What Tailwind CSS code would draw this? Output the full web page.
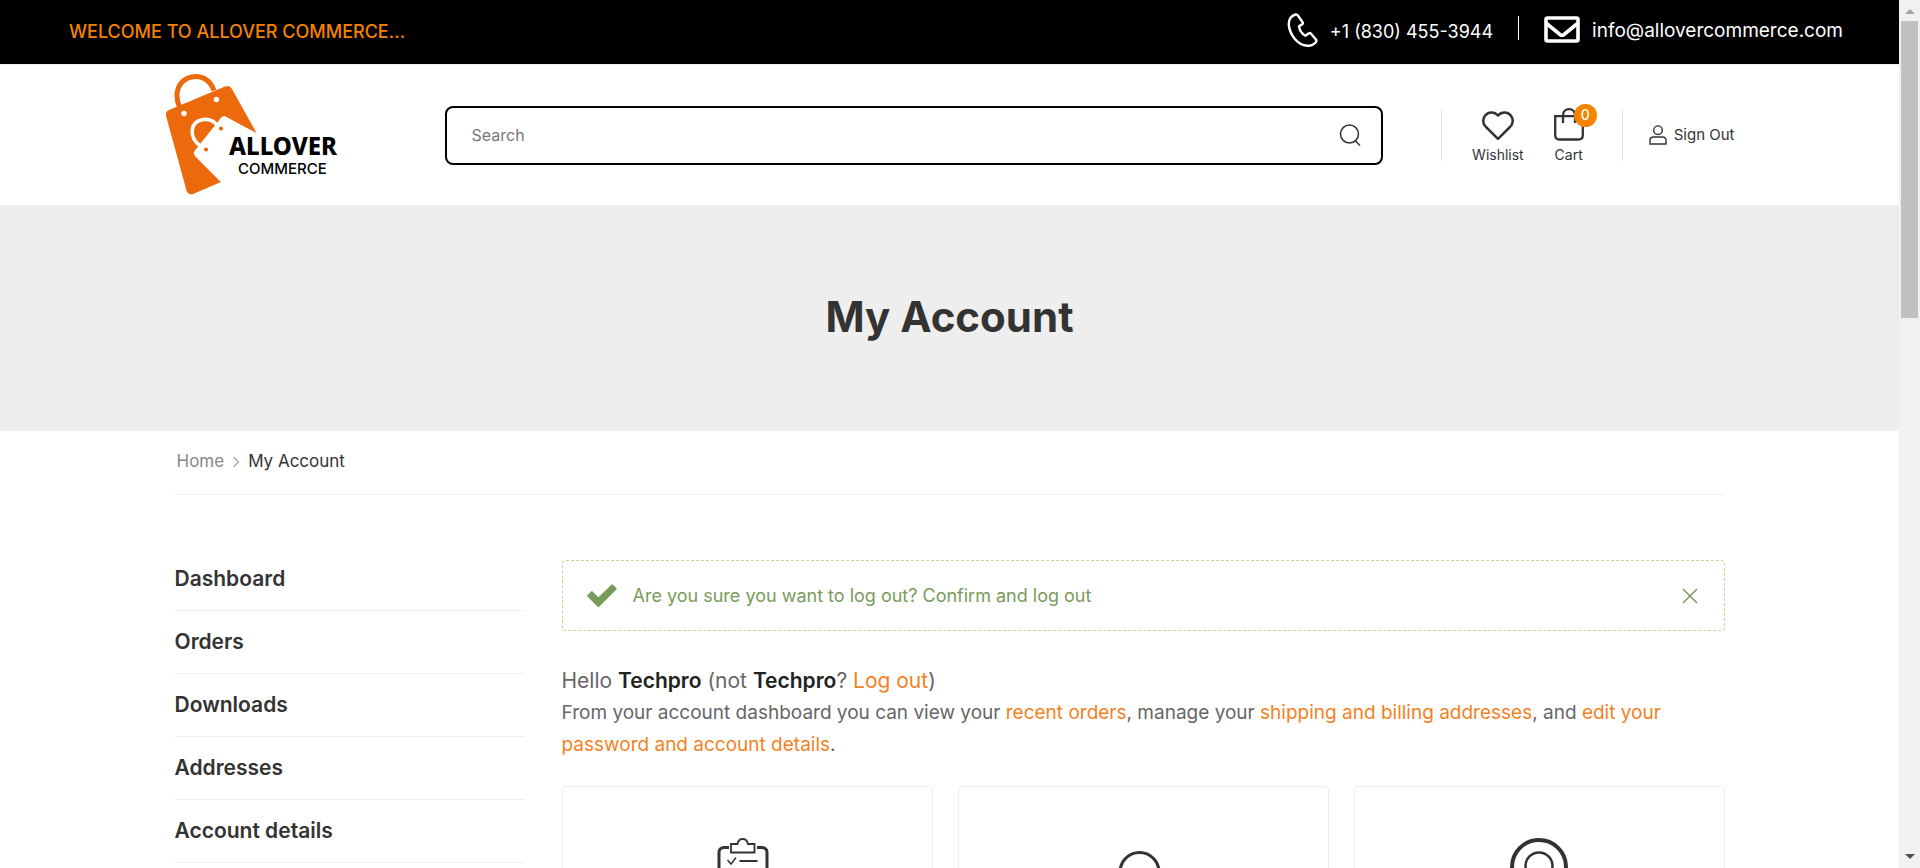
<!DOCTYPE html>
<html lang="en">
<head>
<meta charset="utf-8">
<meta name="viewport" content="width=device-width, initial-scale=1">
<title>My Account</title>
<script src="https://cdn.jsdelivr.net/npm/@tailwindcss/browser@4"></script>
</head>
<body class="flex h-screen overflow-hidden bg-white font-['Inter',sans-serif] text-[#666]">
<div class="min-w-0 flex-1 overflow-hidden">

  <!-- Top bar -->
  <div class="flex h-[65px] items-center justify-between border-b border-[#eee] bg-black pr-14 pl-[69px] text-lg text-white">
    <p class="font-medium text-[#f58300]">WELCOME TO ALLOVER COMMERCE...</p>
    <div class="flex items-center">
      <a href="#" class="flex items-center gap-3">
        <svg class="mb-1 h-9 w-8" viewBox="0 0 32 36" fill="none" stroke="currentColor" stroke-width="2.4" stroke-linejoin="round"><path d="M9.500 2.500C5 4 2.500 8 2.800 13c1 9 8 20 18.500 20.800 4 .2 6.800-1.500 8.700-3.800.6-.8.600-1.500.1-2.300l-5.300-6.200c-.7-.7-1.500-.6-2.200-.1l-3.300 2.300c-3-1.600-5.800-5.600-6.300-9.500l3-1.800c.8-.5 1-1.200.7-2L11.700 3.300c-.5-.8-1.300-1.100-2.200-.8z"/></svg>
        <span>+1 (830) 455-3944</span>
      </a>
      <span class="mx-[25px] mb-2 h-6 w-px bg-white"></span>
      <a href="#" class="flex items-center gap-3">
        <svg class="mb-1 h-[27px] w-9" viewBox="0 0 36 27" fill="none" stroke="currentColor" stroke-width="3.600"><rect x="2" y="2" width="32" height="23" rx="1.500"/><path d="M2.500 7.500 16 18.500c1.300 1 2.700 1 4 0L33.500 7.500"/></svg>
        <span class="pb-0.5 text-[19px]">info@allovercommerce.com</span>
      </a>
    </div>
  </div>

  <!-- Header -->
  <header class="mx-auto flex h-[140px] max-w-[1570px] items-center text-[#333]">
    <a href="#" aria-label="Allover Commerce" class="mr-[103px] block pb-0.5">
      <svg class="h-[125px] w-[177px]" viewBox="0 0 177 125">
        <path fill="none" stroke="#ec6a0c" stroke-width="5" d="M14.500 35C10 25 11 12 22 6.500c12-5.500 23 .5 27 12"/>
        <path fill="#ec6a0c" d="M4 38 60 14.500c3-1.200 5.200-.6 7 2.500L91.500 61 60.500 45c-1.500-.8-3-.3-4.200.8L29.500 79c-1 1.300-1 3 .2 4.500L56 110 28 122c-3.200 1-5.500-.3-6.500-3.500L1.200 44.500C.5 41.500 1.300 39.200 4 38z"/>
        <circle cx="19" cy="41.500" r="2.700" fill="#fff"/><circle cx="51.500" cy="27.500" r="2.700" fill="#fff"/>
        <path fill="none" stroke="#fff" stroke-width="3.600" d="M35.500 74C24 66 24 50 38 47.500c6-.8 11 1.500 14.500 6"/>
        <path fill="#fff" d="M30 79 56 46c1.500-2 3.500-2.200 5.500-1L92 62v48H56L30 84z"/>
        <circle cx="56" cy="56.500" r="2.100" fill="#ec6a0c"/><circle cx="41" cy="77.500" r="2.100" fill="#ec6a0c"/>
        <text x="64" y="83" font-family="Noto Sans" font-weight="800" font-size="24" fill="#000">ALLOVER</text>
        <text x="73" y="102" font-family="Inter" font-weight="500" font-size="15" fill="#000">COMMERCE</text>
      </svg>
    </a>
    <form class="flex h-[59px] flex-1 items-center rounded-lg border-2 border-black pr-5 pl-[25px]">
      <input type="search" aria-label="Search" placeholder="Search" class="min-w-0 flex-1 text-base outline-none placeholder:text-[#777]">
      <button type="button" aria-label="Submit search">
        <svg class="h-6 w-[22px]" viewBox="0 0 22 24" fill="none" stroke="currentColor" stroke-width="1.500"><circle cx="10.500" cy="11" r="9"/><path d="m16.500 18 4.500 4.500"/></svg>
      </button>
    </form>
    <nav class="ml-[58px] flex items-center text-sm">
      <div class="flex h-[51px] items-center gap-[30px] border-x border-[#e5e5e5] pr-[38px] pl-[30px]">
        <a href="#" class="flex flex-col items-center gap-1 pt-0.5">
          <svg class="h-[33px] w-9" viewBox="0 0 36 33" fill="none" stroke="currentColor" stroke-width="2.500" stroke-linejoin="round"><path d="M18 7.500c-4-4.500-10-3.700-13 .3-2.500 3.700-2 8 1 11.200L18 30.800 30 19c3-3.200 3.500-7.500 1-11.200-3-4-9-4.800-13-.3z"/></svg>
          <span>Wishlist</span>
        </a>
        <a href="#" class="relative flex flex-col items-center gap-1 pt-0.5">
          <svg class="h-[33px] w-[30px]" viewBox="0 0 30 33" fill="none" stroke="currentColor" stroke-width="2.300"><path d="M1.200 8.200h27.600v19c0 2.800-1.500 4.300-4.300 4.300h-19c-2.800 0-4.300-1.500-4.300-4.300zM9 15V7.500C9 3.500 11.500 1.200 15 1.200s6 2.300 6 6.300V15"/></svg>
          <span>Cart</span>
          <span class="absolute -top-0.5 left-5 flex size-[23px] items-center justify-center rounded-full bg-[#f58300] text-sm font-medium text-white">0</span>
        </a>
      </div>
      <a href="#" class="ml-[26px] flex items-center gap-[7px]">
        <svg class="h-5 w-[18px]" viewBox="0 0 18 20" fill="none" stroke="currentColor" stroke-width="1.400"><circle cx="9" cy="5.200" r="4.300"/><path d="M1 19v-3.500C1 13.300 2.500 12 4.700 12h8.600c2.200 0 3.700 1.300 3.700 3.500V19z"/></svg>
        <span class="text-[15px]">Sign Out</span>
      </a>
    </nav>
  </header>

  <!-- Page title -->
  <section class="flex h-[226px] items-center justify-center bg-[#eee] pb-1">
    <h1 class="text-[42px] font-bold text-[#333]">My Account</h1>
  </section>

  <main class="mx-auto max-w-[1550px]">
    <nav aria-label="Breadcrumb" class="flex h-16 items-center gap-2 border-b border-[#eee] pb-0.5 pl-0.5 text-[17px]">
      <a href="#" class="text-[#888]">Home</a>
      <svg class="h-3 w-2" viewBox="0 0 8 12" fill="none" stroke="#aaa" stroke-width="1.400"><path d="m1.500 1 5 5-5 5"/></svg>
      <span class="text-[#333]">My Account</span>
    </nav>

    <div class="flex gap-[37px] pt-[53px]">
      <nav aria-label="Account" class="w-[350px] shrink-0 text-[21px] font-semibold text-[#333]">
        <a href="#" class="flex h-[63px] items-center border-b border-[#eee]">Dashboard</a>
        <a href="#" class="flex h-[63px] items-center border-b border-[#eee]">Orders</a>
        <a href="#" class="flex h-[63px] items-center border-b border-[#eee]">Downloads</a>
        <a href="#" class="flex h-[63px] items-center border-b border-[#eee]">Addresses</a>
        <a href="#" class="flex h-[63px] items-center border-b border-[#eee]">Account details</a>
      </nav>

      <section class="min-w-0 flex-1 pt-3">
        <div role="alert" class="flex h-[71px] items-center rounded border border-dashed border-[#b9dd90] px-6 text-lg text-[#799b5a]">
          <svg class="mr-4 h-6 w-[30px] shrink-0" viewBox="0 0 30 24" fill="currentColor"><path d="M.7 10.800 3.800 7.700c.7-.6 1.300-.6 2 0l5.600 5.500L24.200.900c.7-.6 1.300-.6 2 0l3 2.900c.6.700.6 1.300 0 2L12.400 22.600c-.7.700-1.300.7-2 0L.7 12.800c-.6-.7-.6-1.300 0-2z"/></svg>
          <a href="#" class="flex-1">Are you sure you want to log out? Confirm and log out</a>
          <button type="button" aria-label="Close" class="pr-0.5">
            <svg class="size-4" viewBox="0 0 16 16" fill="none" stroke="currentColor" stroke-width="1.500"><path d="m1 1 14 14M15 1 1 15"/></svg>
          </button>
        </div>
        <p class="mt-[34px] text-[21px] leading-8">Hello <strong class="font-semibold text-[#222]">Techpro</strong> (not <strong class="font-semibold text-[#222]">Techpro</strong>? <a href="#" class="text-[#f5811e]">Log out</a>)</p>
        <p class="text-[19px] leading-8">From your account dashboard you can view your <a href="#" class="text-[#f5811e]">recent orders</a>, manage your <a href="#" class="text-[#f5811e]">shipping and billing addresses</a>, and <a href="#" class="text-[#f5811e]">edit your password and account details</a>.</p>

        <div class="mt-[25px] grid grid-cols-3 gap-[25px] text-[#333]">
          <a href="#" aria-label="Orders" class="flex h-60 justify-center rounded border border-[#eee] pt-[51px]">
            <svg class="mr-3 size-[60px]" viewBox="0 0 60 60" fill="none" stroke="currentColor"><path stroke-width="3" d="M18 9.500h-5c-3 0-5 2-5 5V54c0 3 2 5 5 5h38c3 0 5-2 5-5V14.500c0-3-2-5-5-5h-5"/><path stroke-width="1.800" d="M20 14.500V6h6.500c.5-3 2.500-5 5.200-5s4.700 2 5.200 5h6.600v8.500z"/><path stroke-width="1.500" d="m16.500 22 3.500 4 5-6.500M16.500 33l3.500 4 5-6.500"/><path stroke-width="2.200" d="M28.500 23H46.500M28.500 34H46.500"/></svg>
          </a>
          <a href="#" aria-label="Downloads" class="flex h-60 justify-center rounded border border-[#eee] pt-[51px]">
            <svg class="mr-2 size-[60px]" viewBox="0 0 60 60" fill="none" stroke="currentColor" stroke-width="3"><path d="M11 34a19.500 19.500 0 1 1 39 0"/></svg>
          </a>
          <a href="#" aria-label="Addresses" class="flex h-60 justify-center rounded border border-[#eee] pt-[51px]">
            <svg class="size-[60px]" viewBox="0 0 60 60" fill="none" stroke="currentColor"><path stroke-width="4" d="M30 70C14 52 3 42 3 29a27 27 0 0 1 54 0c0 13-11 23-27 41z"/><circle cx="30" cy="28" r="13.500" stroke-width="2.500"/></svg>
          </a>
        </div>
      </section>
    </div>
  </main>
</div>

<!-- Scroll bar -->
<div aria-hidden="true" class="flex w-[21px] shrink-0 flex-col items-center bg-[#f1f1f1]">
  <svg class="h-[21px] w-[10px]" viewBox="0 0 10 21" fill="#a3a3a3"><path d="M0 14h10L5 9z"/></svg>
  <div class="h-[297px] w-[17px] bg-[#c1c1c1]"></div>
  <svg class="mt-auto h-[21px] w-[10px]" viewBox="0 0 10 21" fill="#505050"><path d="M0 7h10l-5 5z"/></svg>
</div>
</body>
</html>
